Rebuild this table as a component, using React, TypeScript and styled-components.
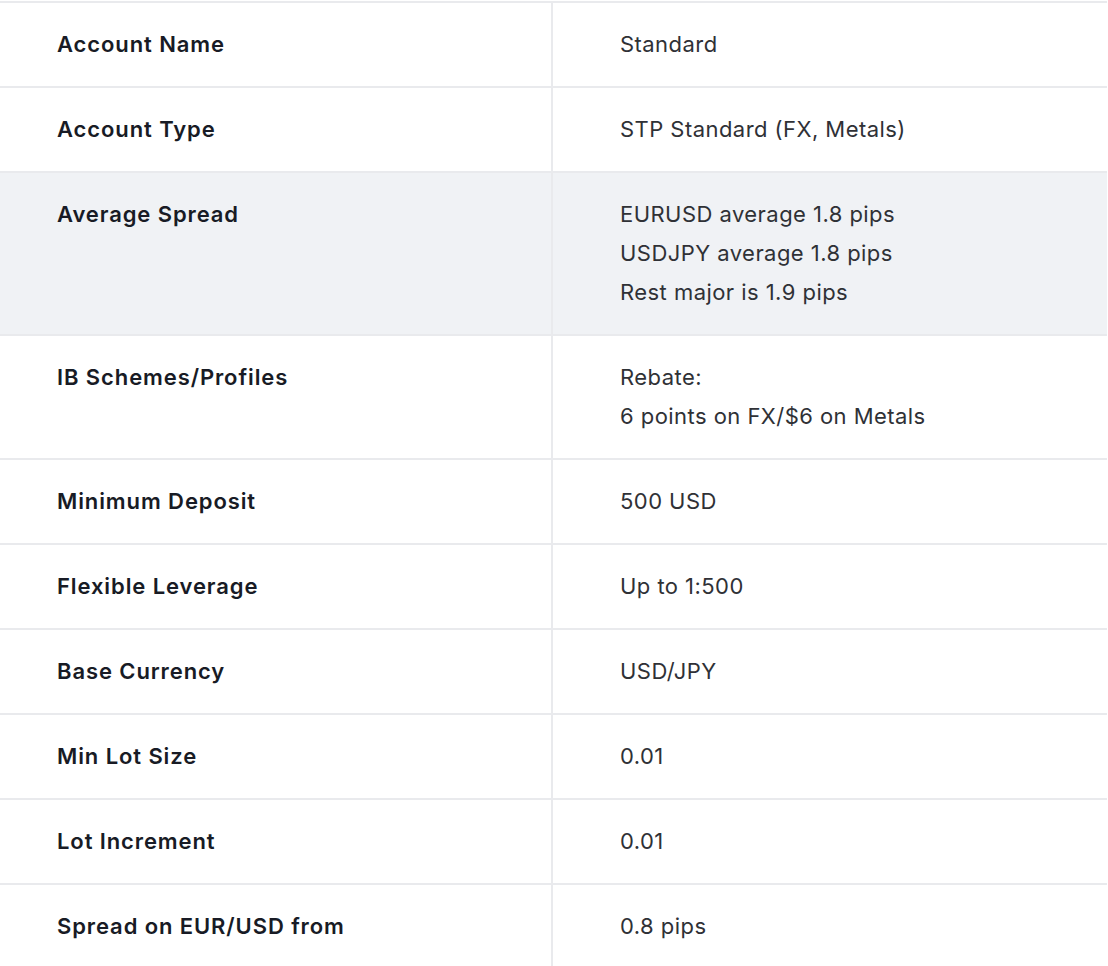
import React from "react";
import styled, { createGlobalStyle } from "styled-components";

const Global = createGlobalStyle`
  html, body { margin: 0; padding: 0; background: #ffffff; }
  body { font-family: "Inter", "Noto Sans", sans-serif; }
`;

const Table = styled.div`
  display: grid;
  grid-template-columns: 551px 1fr;
  width: 1107px;
  margin-top: 1px;
  border-top: 2px solid #e9eaed;
`;

const Row = styled.div<{ $shaded?: boolean }>`
  display: contents;
  & > div {
    background: ${(p) => (p.$shaded ? "#f0f2f5" : "#ffffff")};
  }
`;

const Label = styled.div`
  padding: 22px 20px 22px 57px;
  font-size: 22px;
  line-height: 39px;
  font-weight: 600;
  letter-spacing: 0.9px;
  color: #181b25;
  border-bottom: 2px solid #e9eaed;
`;

const Value = styled.div`
  padding: 22px 20px 22px 67px;
  font-size: 22px;
  line-height: 39px;
  font-weight: 400;
  letter-spacing: 0.45px;
  color: #2f3136;
  border-left: 2px solid #e9eaed;
  border-bottom: 2px solid #e9eaed;
`;

const rows: { label: string; value: string[]; shaded?: boolean }[] = [
  { label: "Account Name", value: ["Standard"] },
  { label: "Account Type", value: ["STP Standard (FX, Metals)"] },
  {
    label: "Average Spread",
    value: ["EURUSD average 1.8 pips", "USDJPY average 1.8 pips", "Rest major is 1.9 pips"],
    shaded: true,
  },
  { label: "IB Schemes/Profiles", value: ["Rebate:", "6 points on FX/$6 on Metals"] },
  { label: "Minimum Deposit", value: ["500 USD"] },
  { label: "Flexible Leverage", value: ["Up to 1:500"] },
  { label: "Base Currency", value: ["USD/JPY"] },
  { label: "Min Lot Size", value: ["0.01"] },
  { label: "Lot Increment", value: ["0.01"] },
  { label: "Spread on EUR/USD from", value: ["0.8 pips"] },
];

export default function App() {
  return (
    <>
      <Global />
      <Table>
        {rows.map((r) => (
          <Row key={r.label} $shaded={r.shaded}>
            <Label>{r.label}</Label>
            <Value>
              {r.value.map((v, i) => (
                <div key={i}>{v}</div>
              ))}
            </Value>
          </Row>
        ))}
      </Table>
    </>
  );
}
